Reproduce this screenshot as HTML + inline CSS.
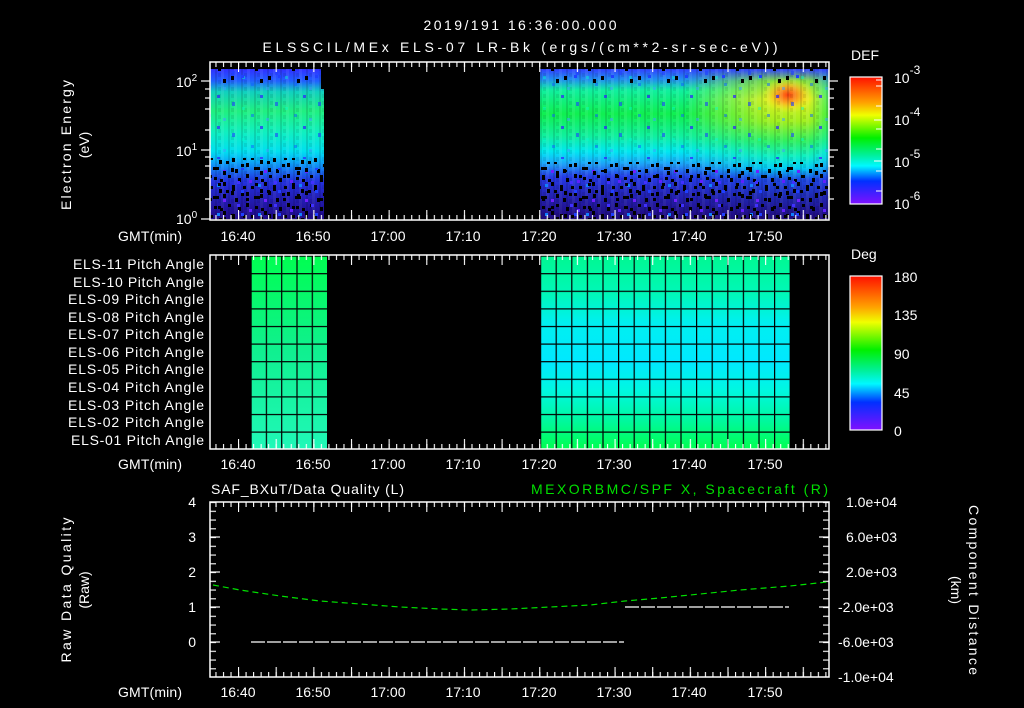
<!DOCTYPE html>
<html><head><meta charset="utf-8"><style>
html,body{margin:0;padding:0;background:#000;width:1024px;height:708px;overflow:hidden}
svg{display:block}
text{font-family:"Liberation Sans",sans-serif;fill:#fff;font-size:14px}
</style></head><body>
<svg width="1024" height="708" viewBox="0 0 1024 708" xmlns="http://www.w3.org/2000/svg">
<defs>
<pattern id="tk" patternUnits="userSpaceOnUse" x="238" y="0" width="7.53" height="10"><line x1="0.5" y1="0" x2="0.5" y2="5" stroke="#fff" stroke-width="1.2"/></pattern>
<pattern id="tkM" patternUnits="userSpaceOnUse" x="238" y="0" width="37.65" height="10"><line x1="0.5" y1="0" x2="0.5" y2="10" stroke="#fff" stroke-width="1.2"/></pattern>
<linearGradient id="gL" x1="0" y1="0" x2="0" y2="1">
<stop offset="0" stop-color="#3030ff"/><stop offset="0.08" stop-color="#2060ff"/><stop offset="0.15" stop-color="#10d0c0"/><stop offset="0.28" stop-color="#20f080"/><stop offset="0.42" stop-color="#10f0c0"/><stop offset="0.55" stop-color="#00e0f0"/><stop offset="0.65" stop-color="#1090ff"/><stop offset="0.75" stop-color="#2838ff"/><stop offset="1" stop-color="#3010d0"/></linearGradient>
<linearGradient id="gR" x1="0" y1="0" x2="0" y2="1">
<stop offset="0" stop-color="#3040ff"/><stop offset="0.07" stop-color="#2090f0"/><stop offset="0.14" stop-color="#10f0a0"/><stop offset="0.3" stop-color="#10f050"/><stop offset="0.45" stop-color="#10f0a0"/><stop offset="0.55" stop-color="#00e8f0"/><stop offset="0.64" stop-color="#20a0ff"/><stop offset="0.72" stop-color="#2840ff"/><stop offset="1" stop-color="#3010c0"/></linearGradient>
<linearGradient id="gRb" x1="0" y1="0" x2="0" y2="1">
<stop offset="0" stop-color="#3040ff"/><stop offset="0.08" stop-color="#80e040"/><stop offset="0.2" stop-color="#e0f020"/><stop offset="0.35" stop-color="#a0f020"/><stop offset="0.48" stop-color="#30f060"/><stop offset="0.58" stop-color="#10f0c0"/><stop offset="0.66" stop-color="#00d8ff"/><stop offset="0.74" stop-color="#2050ff"/><stop offset="1" stop-color="#3010c0"/></linearGradient>
<linearGradient id="gRh" x1="0" y1="0" x2="1" y2="0">
<stop offset="0" stop-color="#fff" stop-opacity="0"/><stop offset="0.5" stop-color="#fff" stop-opacity="0"/><stop offset="0.8" stop-color="#fff" stop-opacity="1"/><stop offset="0.93" stop-color="#fff" stop-opacity="1"/><stop offset="1" stop-color="#fff" stop-opacity="0.3"/></linearGradient>
<mask id="mR"><rect x="540" y="69" width="289" height="150" fill="url(#gRh)"/></mask>
<radialGradient id="hot" cx="0.5" cy="0.5" r="0.5"><stop offset="0" stop-color="#ff4010"/><stop offset="0.45" stop-color="#ffa020" stop-opacity="0.85"/><stop offset="1" stop-color="#ffff20" stop-opacity="0"/></radialGradient>
<pattern id="spk" patternUnits="userSpaceOnUse" width="41" height="29">
<rect x="0" y="0" width="3" height="4" fill="#000"/><rect x="9" y="3" width="3" height="3" fill="#000"/><rect x="18" y="8" width="3" height="4" fill="#000"/><rect x="5" y="12" width="3" height="3" fill="#000"/><rect x="14" y="15" width="3" height="4" fill="#000"/><rect x="23" y="1" width="3" height="3" fill="#000"/><rect x="21" y="16" width="3" height="3" fill="#000"/><rect x="3" y="6" width="3" height="3" fill="#6020ff"/><rect x="12" y="10" width="3" height="3" fill="#1080ff"/><rect x="27" y="11" width="3" height="6" fill="#000"/><rect x="15" y="5" width="3" height="3" fill="#000"/><rect x="33" y="4" width="3" height="4" fill="#000"/><rect x="36" y="19" width="3" height="3" fill="#000"/><rect x="30" y="24" width="3" height="4" fill="#000"/><rect x="8" y="22" width="6" height="3" fill="#000"/><rect x="18" y="25" width="3" height="3" fill="#7020ff"/><rect x="38" y="12" width="3" height="3" fill="#000"/><rect x="0" y="18" width="3" height="4" fill="#000"/></pattern>
<pattern id="spkB" patternUnits="userSpaceOnUse" width="37" height="23" x="7" y="5">
<rect x="2" y="2" width="3" height="4" fill="#000"/><rect x="17" y="9" width="3" height="3" fill="#000"/><rect x="26" y="17" width="3" height="3" fill="#000"/><rect x="8" y="15" width="3" height="3" fill="#4030ff"/><rect x="31" y="5" width="3" height="4" fill="#000"/><rect x="12" y="1" width="3" height="3" fill="#2040ff"/></pattern>
<pattern id="spk2" patternUnits="userSpaceOnUse" width="43" height="31">
<rect x="2" y="2" width="3" height="3" fill="#3020ff" opacity="0.7"/><rect x="17" y="9" width="3" height="4" fill="#2040ff" opacity="0.6"/><rect x="36" y="21" width="3" height="3" fill="#1060ff" opacity="0.5"/><rect x="8" y="25" width="3" height="3" fill="#40a0ff" opacity="0.5"/><rect x="27" y="14" width="3" height="3" fill="#00ffd0" opacity="0.4"/></pattern>
<pattern id="str" patternUnits="userSpaceOnUse" width="13" height="7">
<rect x="0" y="0" width="3" height="7" fill="#fff" opacity="0.07"/><rect x="7" y="0" width="2" height="7" fill="#000" opacity="0.12"/><rect x="10" y="3" width="3" height="4" fill="#000" opacity="0.08"/></pattern>
<linearGradient id="cbD" x1="0" y1="0" x2="0" y2="1">
<stop offset="0" stop-color="#ff1000"/><stop offset="0.2" stop-color="#ffa000"/><stop offset="0.3" stop-color="#f0ff00"/><stop offset="0.48" stop-color="#00f000"/><stop offset="0.62" stop-color="#00f0a0"/><stop offset="0.7" stop-color="#00f8ff"/><stop offset="0.82" stop-color="#0030ff"/><stop offset="1" stop-color="#8010ff"/></linearGradient>
<linearGradient id="fadeTop" x1="0" y1="0" x2="0" y2="1"><stop offset="0" stop-color="#000" stop-opacity="0"/><stop offset="1" stop-color="#000" stop-opacity="0.35"/></linearGradient>
</defs>

<!-- titles -->
<text x="520" y="30" text-anchor="middle" font-size="16" textLength="193" lengthAdjust="spacing">2019/191 16:36:00.000</text>
<text x="520" y="52" text-anchor="middle" font-size="16" textLength="515" lengthAdjust="spacing">ELSSCIL/MEx ELS-07 LR-Bk  (ergs/(cm**2-sr-sec-eV))</text>

<!-- TOP PANEL -->
<g>
<rect x="210" y="69" width="114" height="150" fill="url(#gL)"/>
<rect x="540" y="69" width="289" height="150" fill="url(#gR)"/>
<rect x="540" y="69" width="289" height="150" fill="url(#gRb)" mask="url(#mR)"/>
<ellipse cx="788" cy="95" rx="26" ry="18" fill="url(#hot)"/>
<rect x="210" y="69" width="114" height="150" fill="url(#str)"/>
<rect x="540" y="69" width="289" height="150" fill="url(#str)"/>
<rect x="210" y="69" width="114" height="90" fill="url(#spk2)"/>
<rect x="540" y="69" width="289" height="90" fill="url(#spk2)"/>
<rect x="210" y="69" width="114" height="14" fill="url(#spkB)"/>
<rect x="540" y="69" width="289" height="14" fill="url(#spkB)"/>
<rect x="210" y="160" width="114" height="59" fill="url(#fadeTop)"/>
<rect x="540" y="160" width="289" height="59" fill="url(#fadeTop)"/>
<rect x="210" y="158" width="114" height="61" fill="url(#spk)"/>
<rect x="540" y="162" width="289" height="57" fill="url(#spk)"/>
<rect x="210" y="168" width="114" height="51" fill="url(#spkB)"/>
<rect x="540" y="170" width="289" height="49" fill="url(#spkB)"/>
<rect x="324" y="69" width="216" height="150" fill="#000"/>
<rect x="321" y="69" width="3" height="20" fill="#000"/>
</g>
<rect x="210" y="62" width="619" height="158" fill="none" stroke="#fff" stroke-width="1.5"/>
<g transform="translate(0,62)"><rect x="210" y="0" width="619" height="10" fill="url(#tk)"/><rect x="210" y="0" width="619" height="10" fill="url(#tkM)"/></g>
<g transform="translate(0,220) scale(1,-1)"><rect x="210" y="0" width="619" height="10" fill="url(#tk)"/><rect x="210" y="0" width="619" height="10" fill="url(#tkM)"/></g>
<g stroke="#fff" stroke-width="1.2">
<line x1="201" y1="81" x2="210" y2="81"/><line x1="201" y1="150" x2="210" y2="150"/><line x1="201" y1="219" x2="210" y2="219"/>
<line x1="205" y1="89" x2="210" y2="89"/><line x1="205" y1="98" x2="210" y2="98"/><line x1="205" y1="109" x2="210" y2="109"/><line x1="205" y1="130" x2="210" y2="130"/>
<line x1="205" y1="157" x2="210" y2="157"/><line x1="205" y1="166" x2="210" y2="166"/><line x1="205" y1="178" x2="210" y2="178"/><line x1="205" y1="199" x2="210" y2="199"/>
<line x1="829" y1="81" x2="838" y2="81"/><line x1="829" y1="150" x2="838" y2="150"/><line x1="829" y1="89" x2="834" y2="89"/><line x1="829" y1="98" x2="834" y2="98"/><line x1="829" y1="109" x2="834" y2="109"/><line x1="829" y1="130" x2="834" y2="130"/><line x1="829" y1="157" x2="834" y2="157"/><line x1="829" y1="166" x2="834" y2="166"/><line x1="829" y1="178" x2="834" y2="178"/><line x1="829" y1="199" x2="834" y2="199"/>
</g>
<text x="176" y="87" font-size="14">10<tspan dy="-6" font-size="10">2</tspan></text>
<text x="176" y="156" font-size="14">10<tspan dy="-6" font-size="10">1</tspan></text>
<text x="176" y="224" font-size="14">10<tspan dy="-6" font-size="10">0</tspan></text>
<text transform="translate(71,145) rotate(-90)" text-anchor="middle" font-size="15" textLength="130" lengthAdjust="spacing">Electron Energy</text>
<text transform="translate(89,145) rotate(-90)" text-anchor="middle" font-size="15">(eV)</text>
<g font-size="15">
<text x="118" y="241" textLength="64" lengthAdjust="spacing">GMT(min)</text>
<text x="238" y="241" text-anchor="middle">16:40</text><text x="313" y="241" text-anchor="middle">16:50</text><text x="388" y="241" text-anchor="middle">17:00</text><text x="463" y="241" text-anchor="middle">17:10</text><text x="539" y="241" text-anchor="middle">17:20</text><text x="614" y="241" text-anchor="middle">17:30</text><text x="689" y="241" text-anchor="middle">17:40</text><text x="765" y="241" text-anchor="middle">17:50</text>
</g>
<!-- DEF colorbar -->
<text x="851" y="60" font-size="17">DEF</text>
<rect x="850" y="77" width="32" height="127" fill="url(#cbD)" stroke="#fff" stroke-width="1.2"/>
<g stroke="#fff" stroke-width="1"><line x1="876" y1="80" x2="882" y2="80"/><line x1="876" y1="86" x2="882" y2="86"/><line x1="876" y1="106" x2="882" y2="106"/><line x1="874" y1="120" x2="882" y2="120"/><line x1="876" y1="129" x2="882" y2="129"/><line x1="876" y1="149" x2="882" y2="149"/><line x1="874" y1="161" x2="882" y2="161"/><line x1="876" y1="171" x2="882" y2="171"/><line x1="876" y1="191" x2="882" y2="191"/></g>
<g font-size="17"><text x="894" y="83">10<tspan dy="-9" font-size="12">-3</tspan></text><text x="894" y="125">10<tspan dy="-9" font-size="12">-4</tspan></text><text x="894" y="167">10<tspan dy="-9" font-size="12">-5</tspan></text><text x="894" y="209">10<tspan dy="-9" font-size="12">-6</tspan></text></g>

<!-- MIDDLE PANEL -->
<defs>
<linearGradient id="pL" x1="0" y1="0" x2="0" y2="1"><stop offset="0" stop-color="#00ff50"/><stop offset="0.5" stop-color="#10f090"/><stop offset="1" stop-color="#20f8b8"/></linearGradient>
<linearGradient id="pR" x1="0" y1="0" x2="0" y2="1"><stop offset="0" stop-color="#00f890"/><stop offset="0.2" stop-color="#00f8b8"/><stop offset="0.35" stop-color="#00f0f0"/><stop offset="0.55" stop-color="#00e8ff"/><stop offset="0.7" stop-color="#00f8e0"/><stop offset="0.85" stop-color="#00f8a0"/><stop offset="1" stop-color="#00ff50"/></linearGradient>
<pattern id="grid" patternUnits="userSpaceOnUse" x="250.5" y="255.5" width="15.3" height="17.6"><rect x="0" y="0" width="15.3" height="1.2" fill="#000"/><rect x="0" y="0" width="1.2" height="17.6" fill="#000"/></pattern>
<pattern id="grid2" patternUnits="userSpaceOnUse" x="540" y="255.5" width="15.6" height="17.6"><rect x="0" y="0" width="15.6" height="1.2" fill="#000"/><rect x="0" y="0" width="1.2" height="17.6" fill="#000"/></pattern>
</defs>
<rect x="251" y="255" width="77" height="194" fill="url(#pL)"/>
<rect x="251" y="255" width="77" height="194" fill="url(#grid)"/>
<rect x="540" y="255" width="250" height="194" fill="url(#pR)"/>
<rect x="540" y="255" width="250" height="194" fill="url(#grid2)"/>
<rect x="210" y="255" width="619" height="194" fill="none" stroke="#fff" stroke-width="1.5"/>
<g transform="translate(0,255)"><rect x="210" y="0" width="619" height="10" fill="url(#tk)"/><rect x="210" y="0" width="619" height="10" fill="url(#tkM)"/></g>
<g transform="translate(0,449) scale(1,-1)"><rect x="210" y="0" width="619" height="10" fill="url(#tk)"/><rect x="210" y="0" width="619" height="10" fill="url(#tkM)"/></g>
<g font-size="13" text-anchor="end">
<text x="204" y="269" textLength="131" lengthAdjust="spacing">ELS-11 Pitch Angle</text><text x="204" y="287" textLength="131" lengthAdjust="spacing">ELS-10 Pitch Angle</text><text x="204" y="304" textLength="136" lengthAdjust="spacing">ELS-09 Pitch Angle</text><text x="204" y="322" textLength="136" lengthAdjust="spacing">ELS-08 Pitch Angle</text><text x="204" y="339" textLength="136" lengthAdjust="spacing">ELS-07 Pitch Angle</text><text x="204" y="357" textLength="136" lengthAdjust="spacing">ELS-06 Pitch Angle</text><text x="204" y="374" textLength="136" lengthAdjust="spacing">ELS-05 Pitch Angle</text><text x="204" y="392" textLength="136" lengthAdjust="spacing">ELS-04 Pitch Angle</text><text x="204" y="410" textLength="136" lengthAdjust="spacing">ELS-03 Pitch Angle</text><text x="204" y="427" textLength="136" lengthAdjust="spacing">ELS-02 Pitch Angle</text><text x="204" y="445" textLength="133" lengthAdjust="spacing">ELS-01 Pitch Angle</text>
</g>
<g font-size="15">
<text x="118" y="469" textLength="64" lengthAdjust="spacing">GMT(min)</text>
<text x="238" y="469" text-anchor="middle">16:40</text><text x="313" y="469" text-anchor="middle">16:50</text><text x="388" y="469" text-anchor="middle">17:00</text><text x="463" y="469" text-anchor="middle">17:10</text><text x="539" y="469" text-anchor="middle">17:20</text><text x="614" y="469" text-anchor="middle">17:30</text><text x="689" y="469" text-anchor="middle">17:40</text><text x="765" y="469" text-anchor="middle">17:50</text>
</g>
<text x="851" y="259" font-size="17">Deg</text>
<rect x="850" y="276" width="32" height="154" fill="url(#cbD)" stroke="#fff" stroke-width="1.2"/>
<g font-size="17"><text x="894" y="282">180</text><text x="894" y="320">135</text><text x="894" y="359">90</text><text x="894" y="398">45</text><text x="894" y="436">0</text></g>

<!-- BOTTOM PANEL -->
<text x="211" y="494" font-size="16" textLength="193" lengthAdjust="spacing">SAF_BXuT/Data Quality (L)</text>
<text x="828" y="494" font-size="16" text-anchor="end" textLength="297" lengthAdjust="spacing" style="fill:#00e000">MEXORBMC/SPF X, Spacecraft (R)</text>
<rect x="210" y="502" width="619" height="175" fill="none" stroke="#fff" stroke-width="1.5"/>
<g transform="translate(0,502)"><rect x="210" y="0" width="619" height="10" fill="url(#tk)"/><rect x="210" y="0" width="619" height="10" fill="url(#tkM)"/></g>
<g transform="translate(0,677) scale(1,-1)"><rect x="210" y="0" width="619" height="10" fill="url(#tk)"/><rect x="210" y="0" width="619" height="10" fill="url(#tkM)"/></g>
<defs>
<pattern id="ytkL" patternUnits="userSpaceOnUse" x="210" y="502" width="10" height="8.75"><line x1="0" y1="0.5" x2="6" y2="0.5" stroke="#fff" stroke-width="1.2"/></pattern>
<pattern id="ytkR" patternUnits="userSpaceOnUse" x="823" y="502" width="10" height="8.75"><line x1="0" y1="0.5" x2="6" y2="0.5" stroke="#fff" stroke-width="1.2"/></pattern>
</defs>
<rect x="210" y="502" width="6" height="175" fill="url(#ytkL)"/>
<rect x="823" y="502" width="6" height="175" fill="url(#ytkR)"/>
<g stroke="#fff" stroke-width="1.2">
<line x1="210" y1="537" x2="220" y2="537"/><line x1="210" y1="572" x2="220" y2="572"/><line x1="210" y1="607" x2="220" y2="607"/><line x1="210" y1="642" x2="220" y2="642"/>
<line x1="819" y1="537" x2="829" y2="537"/><line x1="819" y1="572" x2="829" y2="572"/><line x1="819" y1="607" x2="829" y2="607"/><line x1="819" y1="642" x2="829" y2="642"/>
</g>
<polyline points="213,585 240,590 280,596 320,601 360,604 400,607 440,609 470,610 510,609 550,607 590,605 625,601 660,598 700,594 740,590 790,586 827,582" fill="none" stroke="#00e000" stroke-width="1.2" stroke-dasharray="6,4"/>
<line x1="251" y1="642" x2="624" y2="642" stroke="#fff" stroke-width="1.2" stroke-dasharray="14,2"/>
<line x1="625" y1="607" x2="789" y2="607" stroke="#fff" stroke-width="1.2" stroke-dasharray="14,2"/>
<g font-size="15" text-anchor="end"><text x="196" y="507">4</text><text x="196" y="542">3</text><text x="196" y="577">2</text><text x="196" y="612">1</text><text x="196" y="647">0</text></g>
<g font-size="13"><text x="846" y="507">1.0e+04</text><text x="846" y="542">6.0e+03</text><text x="846" y="577">2.0e+03</text><text x="838" y="612">-2.0e+03</text><text x="838" y="647">-6.0e+03</text><text x="838" y="682">-1.0e+04</text></g>
<text transform="translate(71,590) rotate(-90)" text-anchor="middle" font-size="15" textLength="145" lengthAdjust="spacing">Raw Data Quality</text>
<text transform="translate(89,590) rotate(-90)" text-anchor="middle" font-size="15">(Raw)</text>
<text transform="translate(969,590) rotate(90)" text-anchor="middle" font-size="15" textLength="170" lengthAdjust="spacing">Component Distance</text>
<text transform="translate(951,590) rotate(90)" text-anchor="middle" font-size="15">(km)</text>
<g font-size="15">
<text x="118" y="697" textLength="64" lengthAdjust="spacing">GMT(min)</text>
<text x="238" y="697" text-anchor="middle">16:40</text><text x="313" y="697" text-anchor="middle">16:50</text><text x="388" y="697" text-anchor="middle">17:00</text><text x="463" y="697" text-anchor="middle">17:10</text><text x="539" y="697" text-anchor="middle">17:20</text><text x="614" y="697" text-anchor="middle">17:30</text><text x="689" y="697" text-anchor="middle">17:40</text><text x="765" y="697" text-anchor="middle">17:50</text>
</g>
</svg>
</body></html>
